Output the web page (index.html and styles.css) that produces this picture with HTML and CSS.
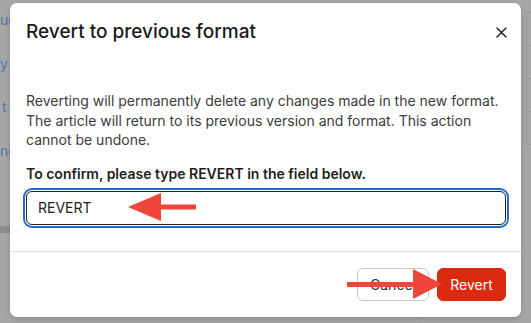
FILE: index.html
```html
<!DOCTYPE html>
<html lang="en">
<head>
<meta charset="utf-8">
<title>Revert to previous format</title>
<link rel="stylesheet" href="styles.css">
</head>
<body>
<div class="page">
  <div class="side">
    <div class="side-link">ue</div>
    <div class="side-link">y F</div>
    <div class="side-link l3">t -</div>
    <div class="side-link">ne</div>
    <div class="side-bar"></div>
  </div>
  <div class="main">
    <div class="grid">
      <div class="grid-row"></div>
      <div class="grid-row"></div>
      <div class="grid-row"></div>
      <div class="grid-row"></div>
    </div>
  </div>
</div>

<div class="modal" role="dialog" aria-labelledby="mt">
  <div class="modal-header">
    <h2 id="mt" class="modal-title">Revert to previous format</h2>
    <button class="close" aria-label="Close">
      <svg width="11" height="11" viewBox="0 0 11 11"><path d="M1 1 L10 10 M10 1 L1 10" stroke="#222" stroke-width="1.5" stroke-linecap="round"/></svg>
    </button>
  </div>
  <div class="modal-body">
    <p class="desc">Reverting will permanently delete any changes made in the new format. The article will return to its previous version and format. This action cannot be undone.</p>
    <label class="label" for="confirm">To confirm, please type REVERT in the field below.</label>
    <div class="input" id="confirm">REVERT</div>
  </div>
  <div class="modal-footer">
    <button class="btn btn-cancel">Cancel</button>
    <button class="btn btn-revert">Revert</button>
  </div>
</div>

<svg class="arrow arrow-left" width="72" height="30" viewBox="0 0 72 30">
  <polygon points="0,14 33,0 33,28" fill="#f0453a"/>
  <rect x="32" y="11.5" width="36" height="5" fill="#f0453a"/>
</svg>
<svg class="arrow arrow-right" width="98" height="32" viewBox="0 0 98 32">
  <rect x="0" y="13" width="68" height="5" fill="#f0453a"/>
  <polygon points="66,0 95,15 66,30" fill="#f0453a"/>
</svg>
</body>
</html>
```

FILE: styles.css
```css
* { box-sizing: border-box; }
html, body { margin: 0; padding: 0; }
body {
  width: 531px;
  height: 323px;
  overflow: hidden;
  background: #a7a7a7;
  font-family: Inter, "Noto Sans", sans-serif;
  position: relative;
}
.page {
  display: flex;
  height: 323px;
}
.side {
  width: 421px;
  border-right: 1px solid #9c9c9c;
  padding-top: 11px;
}
.side-link {
  color: #4f79ad;
  font-size: 14px;
  line-height: 18px;
  height: 43.5px;
  white-space: nowrap;
}
.side-link.l3 { padding-left: 2px; }
.side-bar {
  margin-top: 41px;
  height: 7px;
  background: #8f8f8f;
}
.main {
  flex: 1;
  padding-top: 12px;
}
.grid {
  margin-left: 105px;
  border-left: 1px solid #999;
  border-top: 1px solid #999;
}
.grid-row {
  height: 33px;
  border-bottom: 1px solid #999;
}

.modal {
  position: absolute;
  left: 10px;
  top: 3px;
  width: 511px;
  height: 314px;
  background: #fff;
  border-radius: 7px;
  box-shadow: 0 2px 6px rgba(0,0,0,0.18);
  display: flex;
  flex-direction: column;
}
.modal-header {
  display: flex;
  align-items: center;
  justify-content: space-between;
  padding: 17px 14px 17px 16px;
}
.modal-title {
  margin: 0;
  font-size: 19px;
  line-height: 24px;
  font-weight: 500;
  color: #1b1b1b;
}
.close {
  border: 0;
  background: none;
  padding: 0;
  width: 11px;
  height: 11px;
  display: flex;
}
.modal-body {
  padding: 30px 15px 26px 16px;
  display: flex;
  flex-direction: column;
}
.desc {
  margin: 0;
  font-size: 14px;
  line-height: 19.6px;
  color: #3c3c3c;
}
.label {
  margin-top: 14px;
  font-size: 14px;
  line-height: 20px;
  font-weight: 600;
  color: #1e1e1e;
}
.input {
  margin-top: 7px;
  height: 34px;
  border: 1px solid #222;
  border-radius: 6px;
  box-shadow: 0 0 0 1px #fff, 0 0 0 3px #1f6fce;
  padding: 0 11px;
  display: flex;
  align-items: center;
  font-size: 14px;
  color: #222;
}
.modal-footer {
  border-top: 1px solid #dcdcdc;
  flex: 1;
  display: flex;
  align-items: center;
  justify-content: flex-end;
  gap: 8px;
  padding: 0 15px 0 16px;
}
.btn {
  font-family: Inter, "Noto Sans", sans-serif;
  font-size: 14px;
  height: 33px;
  border-radius: 6px;
  padding: 0 12px;
}
.btn-cancel {
  background: #fff;
  border: 1px solid #c9c9c9;
  color: #333;
  width: 72px;
}
.btn-revert {
  background: #db2a10;
  border: 1px solid #db2a10;
  color: #fff;
  width: 69px;
}
.arrow { position: absolute; }
.arrow-left { left: 128px; top: 193px; }
.arrow-right { left: 347px; top: 269px; }
```
